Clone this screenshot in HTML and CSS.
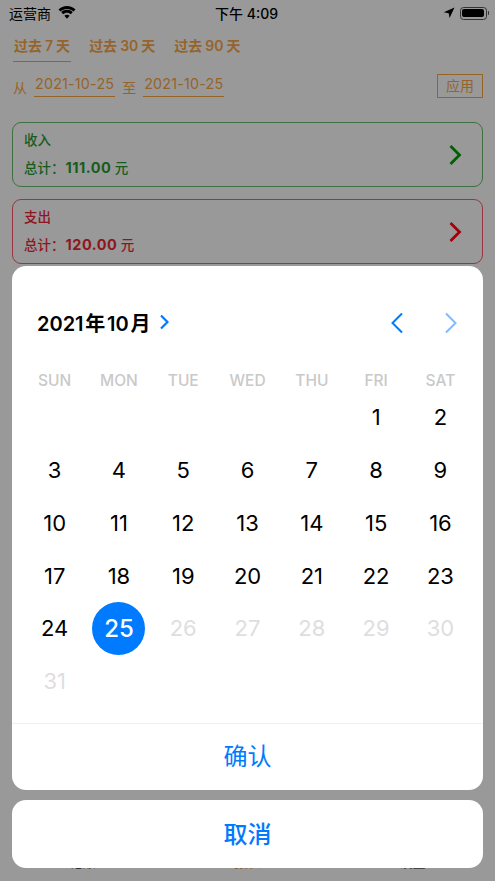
FILE: index.html
```html
<!DOCTYPE html>
<html lang="zh">
<head>
<meta charset="utf-8">
<title>日期选择</title>
<link rel="stylesheet" href="styles.css">
</head>
<body>
<div class="screen">
  <div class="status">
    <div class="status-left">
      <span>运营商</span>
      <svg class="wifi" viewBox="0 0 18 13" width="18" height="13"><path d="M9 2.900c2.500 0 4.800 1 6.500 2.600L17.500 3.400C15.300 1.300 12.300 0 9 0S2.700 1.300.5 3.400l2 2.100C4.200 3.900 6.500 2.900 9 2.900z"/><path d="M9 6.700c1.500 0 2.800.6 3.800 1.500l2-2.100C13.200 4.600 11.200 3.800 9 3.800s-4.200.8-5.800 2.300l2 2.100c1-.9 2.300-1.500 3.800-1.500z"/><path d="M9 8.800c-1 0-1.900.4-2.600 1L9 12.800l2.600-3c-.7-.6-1.600-1-2.600-1z"/></svg>
    </div>
    <div class="status-time">下午 4:09</div>
    <div class="status-right">
      <svg class="loc" viewBox="0 0 12 12" width="12" height="12"><path d="M11.500.5L.8 5.300l4.900.9.900 4.900z"/></svg>
      <div class="battery"><div class="battery-fill"></div></div>
      <div class="battery-cap"></div>
    </div>
  </div>

  <div class="tabs">
    <div class="tab tab-active">过去 7 天</div>
    <div class="tab">过去 30 天</div>
    <div class="tab">过去 90 天</div>
  </div>

  <div class="range">
    <span class="range-label">从</span>
    <span class="range-date">2021-10-25</span>
    <span class="range-label">至</span>
    <span class="range-date">2021-10-25</span>
    <span class="apply">应用</span>
  </div>

  <div class="card card-green">
    <div class="card-body">
      <div class="card-title">收入</div>
      <div class="card-total">总计：<b>111.00</b> 元</div>
    </div>
    <svg class="card-arrow" viewBox="0 0 14 22" width="14" height="22"><path d="M2.500 2l9 9-9 9"/></svg>
  </div>

  <div class="card card-red">
    <div class="card-body">
      <div class="card-title">支出</div>
      <div class="card-total">总计：<b>120.00</b> 元</div>
    </div>
    <svg class="card-arrow" viewBox="0 0 14 22" width="14" height="22"><path d="M2.500 2l9 9-9 9"/></svg>
  </div>

  <div class="tabbar">
    <span>记账</span><span class="tabbar-active">报表</span><span>设置</span>
  </div>

  <div class="overlay"></div>

  <div class="sheet">
    <div class="panel">
      <div class="cal-head">
        <div class="month"><span>2021 年 10 月</span>
          <svg class="month-arrow" viewBox="0 0 10 16" width="10" height="16"><path d="M2 1.500L8.500 8 2 14.500"/></svg>
        </div>
        <div class="cal-nav">
          <svg class="nav-arrow" viewBox="0 0 14 22" width="14" height="22"><path d="M12 1.500L2.500 11l9.500 9.500"/></svg>
          <svg class="nav-arrow nav-off" viewBox="0 0 14 22" width="14" height="22"><path d="M2 1.500L11.500 11 2 20.500"/></svg>
        </div>
      </div>
      <div class="weekdays">
        <span>SUN</span><span>MON</span><span>TUE</span><span>WED</span><span>THU</span><span>FRI</span><span>SAT</span>
      </div>
      <div class="days">
        <span></span><span></span><span></span><span></span><span></span><span>1</span><span>2</span>
        <span>3</span><span>4</span><span>5</span><span>6</span><span>7</span><span>8</span><span>9</span>
        <span>10</span><span>11</span><span>12</span><span>13</span><span>14</span><span>15</span><span>16</span>
        <span>17</span><span>18</span><span>19</span><span>20</span><span>21</span><span>22</span><span>23</span>
        <span>24</span><span class="day-selected"><i>25</i></span><span class="day-off">26</span><span class="day-off">27</span><span class="day-off">28</span><span class="day-off">29</span><span class="day-off">30</span>
        <span class="day-off">31</span>
      </div>
      <div class="confirm">确认</div>
    </div>
    <div class="cancel">取消</div>
  </div>
</div>
</body>
</html>
```
FILE: styles.css
```css
* { box-sizing: border-box; }
html, body { margin: 0; padding: 0; }
body {
  width: 495px;
  height: 881px;
  overflow: hidden;
  font-family: "Inter", "Noto Sans CJK SC", sans-serif;
  background: #fff;
}
.screen {
  position: relative;
  width: 495px;
  height: 881px;
  overflow: hidden;
  background: #fff;
}
.status {
  height: 26px;
  display: grid;
  grid-template-columns: 1fr auto 1fr;
  align-items: center;
  padding: 0 9px;
  font-size: 14px;
  color: #000;
}
.status-left { display: flex; align-items: center; gap: 7px; }
.wifi { fill: #000; margin-top: -2px; }
.status-time { font-weight: 500; font-size: 14px; margin-left: -2px; }
.status-right { display: flex; align-items: center; justify-content: flex-end; margin-right: -3px; }
.loc { fill: #000; margin-right: 5px; }
.battery {
  width: 27px; height: 13px; border: 1px solid #555; border-radius: 3.500px; padding: 1.500px;
}
.battery-fill { width: 100%; height: 100%; background: #000; border-radius: 2px; }
.battery-cap { width: 1.500px; height: 4px; background: #555; margin-left: 1px; border-radius: 0 1px 1px 0; }

/* Content above the dimming layer carries its already dimmed colours. */
.tabs, .range, .card { position: relative; z-index: 1; }

.tabs { display: flex; gap: 17px; padding: 8px 13px 0; }
.tab {
  height: 28px; padding: 1px 1px 0; font-size: 14px; font-weight: 600; color: #96642a; white-space: pre; word-spacing: -.5px;
}
.tab-active { border-bottom: 1px solid #966424; }

.range {
  display: flex; align-items: flex-start; padding: 11px 12px 0 13px; font-size: 14px; color: #96642a;
  height: 48px;
}
.range-label { line-height: 24px; margin-top: 3px; }
.range-date {
  height: 24px; line-height: 21px; margin: 0 7px; padding: 0 1px; border-bottom: 1px solid #966424;
  font-size: 14.300px; letter-spacing: .2px;
}
.apply {
  margin-left: auto; width: 46px; height: 24px; line-height: 22px; margin-top: 1px; text-align: center;
  border: 1.500px solid #966424; font-size: 14px;
}

.card {
  display: flex; align-items: center; justify-content: space-between;
  height: 65px; margin: 12px 12px 0; padding: 0 20px 2px 11px;
  border: 1.300px solid; border-radius: 9px;
}
.card-green { border-color: #3f7042; color: #175c1d; }
.card-red { border-color: #9a3640; color: #8e1620; }
.card-title { font-size: 13.500px; font-weight: 500; line-height: 20px; }
.card-total { font-size: 13.500px; font-weight: 500; line-height: 20px; margin-top: 8px; white-space: pre; }
.card-total b { font-size: 14.500px; font-weight: 700; letter-spacing: .5px; margin-left: 1px; }
.card-arrow { fill: none; stroke-width: 2.800px; margin-top: 2px; }
.card-green .card-arrow { stroke: #005f00; }
.card-red .card-arrow { stroke: #a4000a; }

.tabbar {
  position: absolute; left: 0; right: 0; bottom: 11px; height: 18px;
  display: grid; grid-template-columns: repeat(3, 1fr); text-align: center;
  font-size: 13px; color: #555;
}
.tabbar-active { color: #e8911a; }

.overlay { position: absolute; inset: 0; background: rgba(0, 0, 0, .4); }

.sheet {
  position: absolute; left: 12px; right: 12px; top: 266px; z-index: 2;
  display: flex; flex-direction: column; gap: 10px;
}
.panel { background: #fff; border-radius: 14px; height: 524px; display: flex; flex-direction: column; overflow: hidden; }
.cal-head {
  display: flex; align-items: center; justify-content: space-between;
  height: 28px; margin-top: 42px; padding: 0 25px;
}
.month { display: flex; align-items: center; gap: 9px; font-size: 20px; font-weight: 600; color: #000; word-spacing: -3.300px; }
.month-arrow { fill: none; stroke: #007aff; stroke-width: 2.200px; }
.cal-nav { display: flex; gap: 40px; margin-top: 2px; }
.nav-arrow { fill: none; stroke: #007aff; stroke-width: 2px; }
.nav-off { opacity: .5; }
.weekdays {
  display: grid; grid-template-columns: repeat(7, 64.300px); padding-left: 10.500px; margin-top: 36px;
  text-align: center; font-size: 15.500px; font-weight: 500; color: #c9c9c9; line-height: 18px;
}
.days {
  display: grid; grid-template-columns: repeat(7, 64.300px); grid-auto-rows: 52.750px; padding-left: 10.500px;
  margin-top: 1px; height: 332px;
  text-align: center; font-size: 22px; color: #000;
}
.days span { display: flex; align-items: center; justify-content: center; }
.day-off { color: #dedee0; }
.day-selected i {
  width: 53px; height: 53px; border-radius: 50%; background: #007aff; color: #fff; font-style: normal; font-weight: 500; font-size: 24px;
  display: flex; align-items: center; justify-content: center;
}
.confirm {
  flex: 1; border-top: 1px solid #efeff0; display: flex; align-items: center; justify-content: center;
  font-size: 24px; color: #007aff; padding-bottom: 5px;
}
.cancel {
  height: 68px; background: #fff; border-radius: 14px; display: flex; align-items: center; justify-content: center;
  font-size: 24px; font-weight: 500; color: #007aff; padding-bottom: 4px;
}
```
